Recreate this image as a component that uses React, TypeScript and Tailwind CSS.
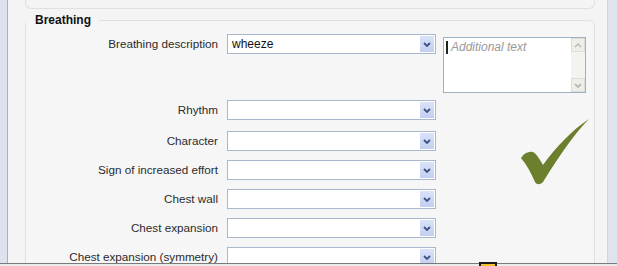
import React from 'react';

const rows = [
  { label: 'Rhythm', mt: 'mt-[7px]' },
  { label: 'Character', mt: 'mt-[11px]' },
  { label: 'Sign of increased effort', mt: 'mt-[9px]' },
  { label: 'Chest wall', mt: 'mt-[9px]' },
  { label: 'Chest expansion', mt: 'mt-[9px]' },
  { label: 'Chest expansion (symmetry)', mt: 'mt-[9px]' },
];

function Chevron({ color = '#3f5285' }: { color?: string }) {
  return (
    <svg width="8" height="5" viewBox="0 0 8 5">
      <polyline points="1,1 4,4 7,1" fill="none" stroke={color} strokeWidth="1.8" />
    </svg>
  );
}

function Select({ value }: { value?: string }) {
  return (
    <div className="flex h-[20px] w-[209px] items-stretch border border-[#a9b7cc] bg-white">
      <div className="flex-1 truncate pl-[4px] text-[12px] leading-[18px] text-[#111]">{value}</div>
      <div className="m-[1px] flex w-[14px] items-center justify-center bg-gradient-to-b from-[#d9e2f8] to-[#c3cff1]">
        <Chevron />
      </div>
    </div>
  );
}

function Row({ label, className, children }: { label: string; className?: string; children?: React.ReactNode }) {
  return (
    <div className={`flex items-start ${className ?? ''}`}>
      <div className="w-[192px] text-right text-[11.7px] leading-[20px] text-[#2b2b2b]">{label}</div>
      <div className="ml-[9px]">{children}</div>
    </div>
  );
}

export default function App() {
  return (
    <div className="relative h-[266px] w-[617px] overflow-hidden bg-[#ebebeb] font-['Liberation_Sans',Arial,sans-serif]">
      <div className="flex h-[264px] border-b border-[#7a7a7a]">
        {/* left window edge */}
        <div className="w-[8px] border-r border-[#aab0bb] bg-[#dde3ee]" />

        <div className="flex-1 overflow-hidden bg-[#f4f4f4]">
          {/* bottom of previous panel */}
          <div className="ml-[17px] mr-[12px] h-[9px] rounded-b-[6px] border-x border-b border-[#e0e0e0]" />

          <fieldset className="ml-[17px] mr-[12px] mt-[4px] h-[300px] rounded-[6px] border border-[#e0e0e0] bg-[#f6f6f6]">
            <legend className="ml-[1px] px-[8px] text-[12px] font-bold leading-[14px] text-[#111]">Breathing</legend>

            <div className="mt-[7px] flex items-start">
              <Row label="Breathing description">
                <Select value="wheeze" />
              </Row>
              {/* Additional text box */}
              <div className="ml-[7px] mt-[3px] flex h-[56px] w-[143px] border border-[#9fb2c4] bg-white">
                <div className="flex flex-1 items-start pl-[2px] pt-[2px]">
                  <span className="mt-[1px] h-[13px] w-[2px] bg-[#222]" />
                  <span className="ml-[3px] text-[12px] italic leading-[14px] text-[#9a9a9a]">Additional text</span>
                </div>
                <div className="flex w-[14px] flex-col justify-between bg-[#f3f3ef]">
                  <div className="flex h-[14px] items-center justify-center border border-[#deded8] bg-[#efefea]">
                    <svg width="8" height="5" viewBox="0 0 8 5">
                      <polyline points="1,4 4,1 7,4" fill="none" stroke="#b9b9b4" strokeWidth="1.4" />
                    </svg>
                  </div>
                  <div className="flex h-[14px] items-center justify-center border border-[#deded8] bg-[#efefea]">
                    <Chevron color="#b9b9b4" />
                  </div>
                </div>
              </div>
            </div>

            {rows.map((r) => (
              <Row key={r.label} label={r.label} className={r.mt}>
                <Select />
              </Row>
            ))}
          </fieldset>
        </div>

        {/* right window edge */}
        <div className="w-[10px] border-l border-[#d0d5de] bg-[#dfe4ee]" />
      </div>

      {/* check mark overlay */}
      <svg className="absolute left-[518px] top-[115px]" width="74" height="72" viewBox="0 0 74 72">
        <path
          d="M3 43 C6 38 11 36 15 37 C19 39 22 45 25 50 C38 32 54 15 71 4 C58 17 43 38 25 67 C22 70 19 70 17 67 C13 58 9 50 3 43 Z"
          fill="#6b7f2c"
        />
      </svg>

      {/* yellow marker at the bottom edge */}
      <div className="absolute left-[479px] top-[262px] h-[10px] w-[18px] border-2 border-[#1a1a1a] bg-[#f2c12e]" />
    </div>
  );
}
